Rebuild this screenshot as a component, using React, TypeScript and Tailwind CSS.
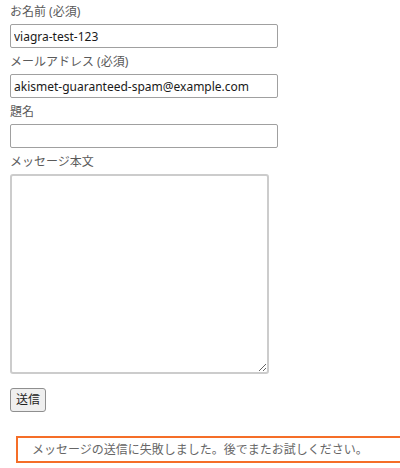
import React from "react";

const font = { fontFamily: '"Noto Sans", "Noto Sans CJK JP", sans-serif' };

const fields = [
  { id: "name", label: "お名前 (必須)", value: "viagra-test-123" },
  { id: "email", label: "メールアドレス (必須)", value: "akismet-guaranteed-spam@example.com" },
  { id: "subject", label: "題名", value: "" },
];

export default function App() {
  return (
    <div className="w-[400px] h-[468px] overflow-hidden bg-white" style={font}>
      <form className="flex flex-col pt-[2px]">
        {fields.map((f) => (
          <div key={f.id} className="flex flex-col pl-[10px] pb-[4px]">
            <label className="h-[20px] leading-[20px] text-[12px] text-[#5a5a5a]">{f.label}</label>
            <input
              readOnly
              value={f.value}
              className="mt-[2px] w-[268px] h-[24px] px-[3px] text-[12px] text-[#1a1a1a] bg-white border border-[#a0a0a0] rounded-[2px] outline-none"
              style={font}
            />
          </div>
        ))}

        {/* message body */}
        <div className="flex flex-col pl-[10px]">
          <label className="h-[20px] leading-[20px] text-[12px] text-[#5a5a5a]">メッセージ本文</label>
          <textarea
            readOnly
            className="mt-[2px] w-[259px] h-[200px] border-2 border-[#cccccc] rounded-[3px] bg-white outline-none"
          />
        </div>

        <div className="pl-[10px] pt-[12px]">
          <button
            type="button"
            className="h-[24px] px-[5px] text-[12px] text-[#222] bg-[#efefef] border border-[#8f8f8f] rounded-[3px]"
            style={font}
          >
            送信
          </button>
        </div>

        {/* response output */}
        <div className="ml-[16px] mt-[24px] w-[420px] h-[27px] border-2 border-[#f56e28] flex items-center pl-[14px]">
          <span className="text-[12px] text-[#666]">
            メッセージの送信に失敗しました。後でまたお試しください。
          </span>
        </div>
      </form>
    </div>
  );
}
